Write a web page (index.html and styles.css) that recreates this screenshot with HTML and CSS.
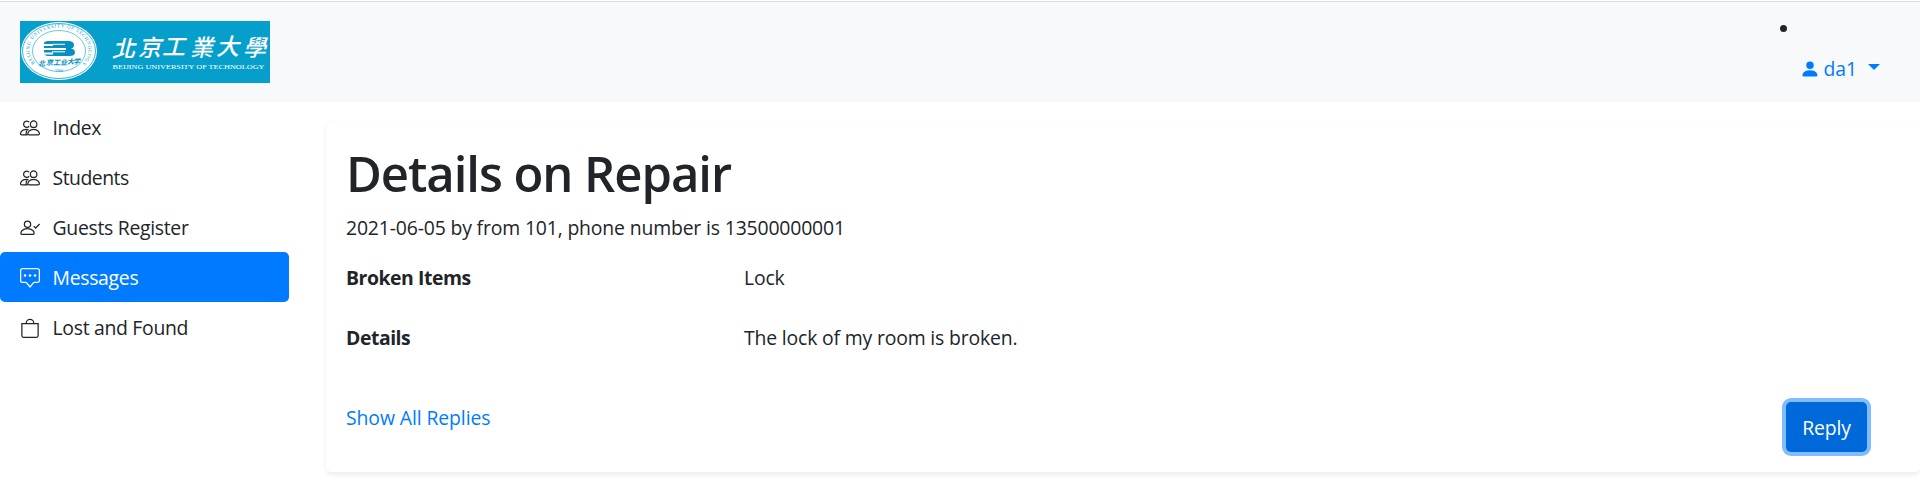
FILE: index.html
```html
<!DOCTYPE html>
<html lang="en">
<head>
<meta charset="utf-8">
<title>Details on Repair</title>
<link rel="stylesheet" href="styles.css">
</head>
<body>
<header class="navbar">
  <svg class="logo" width="250" height="62" viewBox="0 0 250 62">
    <rect width="250" height="62" fill="#069fcb"/>
    <ellipse cx="39" cy="30" rx="38" ry="29" fill="#fff"/>
    <ellipse cx="39" cy="30" rx="36.5" ry="27.5" fill="none" stroke="#069fcb" stroke-width=".8"/>
    <ellipse cx="39" cy="30" rx="26.5" ry="20.5" fill="none" stroke="#069fcb" stroke-width=".6"/>
    <path id="ring" d="M15 42A29.5 22.500 0 1 1 63 42" fill="none"/>
    <text class="logo-ring"><textPath href="#ring" textLength="112">BEIJING UNIVERSITY OF TECHNOLOGY</textPath></text>
    <path d="M27 20H48Q54 20 54 24Q54 27 51 27.500Q55 28 55 31.500Q55 35 49 35H27L24 33.500H33V31.500H24V29H46V27H24V25H33V23H24V21.500Z" fill="#078fbd"/>
    <path d="M32 23.300H45M32 30.800H45" stroke="#fff" stroke-width="1"/>
    <text class="logo-script-small" x="18 26 33 40 47 53" y="44.500 44 43.500 43.500 43 43">北京工业大学</text>
    <text class="logo-year" x="39" y="50.500" text-anchor="middle">1960</text>
    <text class="logo-script" x="92 118 142 170 196 223" y="35.500 34.500 33.500 34.500 33.500 34.500">北京工業大學</text>
    <text class="logo-latin" x="92.500" y="47.500" textLength="152" lengthAdjust="spacingAndGlyphs">BEIJING UNIVERSITY OF TECHNOLOGY</text>
  </svg>
  <ul class="user-nav">
    <li>
      <a class="user-link">
        <svg width="20" height="20" viewBox="0 0 16 16" fill="currentColor"><path d="M3 14s-1 0-1-1 1-4 6-4 6 3 6 4-1 1-1 1H3zm5-6a3 3 0 1 0 0-6 3 3 0 0 0 0 6z"/></svg>
        <span>da1</span><i class="caret"></i>
      </a>
    </li>
  </ul>
</header>
<div class="layout">
  <nav class="sidebar">
    <a class="item"><svg class="icon" viewBox="0 0 16 16"><use href="#people"/></svg><span>Index</span></a>
    <a class="item"><svg class="icon" viewBox="0 0 16 16"><use href="#people"/></svg><span class="t-students">Students</span></a>
    <a class="item"><svg class="icon" viewBox="0 0 16 16"><path d="M1.500 13s-.8 0-.8-.9 1-3.600 5.300-3.600 5.300 2.700 5.300 3.600-.8.9-.8.9zM6 7.500a2.500 2.500 0 1 0 0-5 2.500 2.500 0 0 0 0 5zM11 6.500l1.500 1.500L15.700 4.800"/></svg><span>Guests Register</span></a>
    <a class="item active"><svg class="icon" viewBox="0 0 16 16"><path d="M2 .5h12A1.500 1.500 0 0 1 15.500 2v8a1.500 1.500 0 0 1-1.500 1.500h-2.500a1 1 0 0 0-.8.400L8 15.200l-2.700-3.300a1 1 0 0 0-.8-.4H2A1.500 1.500 0 0 1 .5 10V2A1.500 1.500 0 0 1 2 .5z"/><g class="dots"><circle cx="4" cy="6" r="1"/><circle cx="8" cy="6" r="1"/><circle cx="12" cy="6" r="1"/></g></svg><span>Messages</span></a>
    <a class="item"><svg class="icon" viewBox="0 0 16 16"><path d="M1.500 4.500h13V14a1.500 1.500 0 0 1-1.500 1.500H3A1.500 1.500 0 0 1 1.500 14zM5 4.500V4a3 3 0 0 1 6 0v.5"/></svg><span>Lost and Found</span></a>
  </nav>
  <main class="card">
    <h1>Details on Repair</h1>
    <p class="meta">2021-06-05 by from 101, phone number is 13500000001</p>
    <dl class="fields">
      <dt>Broken Items</dt><dd>Lock</dd>
      <dt>Details</dt><dd>The lock of my room is broken.</dd>
    </dl>
    <div class="actions">
      <a class="replies">Show All Replies</a>
      <button class="reply">Reply</button>
    </div>
  </main>
</div>
<svg width="0" height="0"><defs>
  <g id="people"><path d="M7.200 13.500s-.9 0-.9-.9S7.200 9 10.900 9s4.600 2.700 4.600 3.600-.9.9-.9.9zM10.900 7.500a2.600 2.600 0 1 0 0-5.200 2.600 2.600 0 0 0 0 5.200zM6 13.500H1.300s-.9 0-.9-.9S1.300 9 5 9q1 0 1.800.3M7.300 6.600A2.500 2.500 0 1 1 7.300 3.400M5.800 9.200Q4.800 10.500 4.800 13.300"/></g>
</defs></svg>
</body>
</html>
```
FILE: styles.css
```css
* { box-sizing: border-box; }
body {
  margin: 0;
  height: 482px;
  overflow: hidden;
  background: #fff;
  color: #212529;
  font: 19.4px/30px "Open Sans", "Noto Sans", sans-serif;
}
.navbar {
  display: flex;
  justify-content: space-between;
  height: 102px;
  padding: 21px 40px 0 20px;
  background: linear-gradient(#fff 1px, #d9dde1 1px, #d9dde1 2px, #f8f9fb 2px);
}
.logo { display: block; }
.logo-ring { font: 5px "Liberation Serif", serif; fill: #069fcb; }
.logo-script-small { font: bold italic 7px "Noto Sans CJK SC", sans-serif; fill: #078fbd; }
.logo-year { font: 4px "Liberation Serif", serif; fill: #069fcb; }
.logo-script { font: italic 500 23px "Noto Sans CJK TC", sans-serif; fill: #fff; }
.logo-latin { font: 6.5px "Liberation Serif", serif; fill: #fff; }
.user-nav { position: relative; margin: -7px 0 0; padding: 0; list-style: none; }
.user-nav::before {
  content: "";
  position: absolute;
  left: -20px;
  top: 11px;
  width: 7px;
  height: 7px;
  border-radius: 50%;
  background: #212529;
}
.user-link { display: flex; align-items: center; padding-top: 40px; color: #007bff; }
.user-link span { margin-left: 4px; letter-spacing: -.1px; }
.caret { margin: -5px 0 0 11px; border: 6px solid transparent; border-top-color: #007bff; border-bottom: 0; }
.layout { display: flex; }
.sidebar { width: 289px; letter-spacing: -.3px; }
.item { display: flex; align-items: center; height: 50px; padding: 2px 20px 0; }
.item.active { border-radius: 5px; background: #007bff; color: #fff; }
.icon { width: 20px; height: 20px; margin-right: 12.5px; fill: none; stroke: currentColor; stroke-width: 1; overflow: visible; }
.dots { fill: currentColor; stroke: none; }
.t-students { letter-spacing: -.5px; }
.card {
  flex: 1;
  height: 350px;
  margin: 20px 0 0 37px;
  padding: 21px 20px 0;
  border-radius: 5px;
  box-shadow: 0 2.5px 5px rgba(0, 0, 0, .075);
}
h1 { margin: 0 0 10px; font-size: 49px; font-weight: 600; line-height: 60px; letter-spacing: -1.05px; }
.meta { margin: 0 0 20px; letter-spacing: -.16px; }
.fields { display: grid; grid-template-columns: 398px 1fr; row-gap: 30px; margin: 0; }
dt { font-weight: 700; letter-spacing: -.45px; }
dd { margin: 0; letter-spacing: -.17px; }
.actions { display: flex; justify-content: space-between; padding: 50px 33px 0 0; }
.replies { color: #007bff; letter-spacing: -.1px; }
.reply {
  width: 81px;
  height: 50px;
  margin-top: -1px;
  padding: 2px 0 0;
  border: 0;
  border-radius: 5px;
  background: #0069d9;
  box-shadow: 0 0 0 4px #80bdff;
  color: #fff;
  font: inherit;
  letter-spacing: -.2px;
}
```
